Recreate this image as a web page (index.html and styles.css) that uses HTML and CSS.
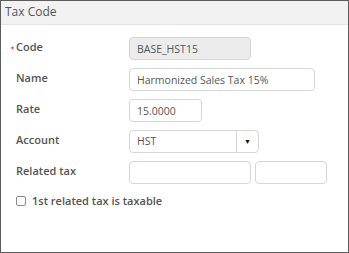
FILE: index.html
```html
<!DOCTYPE html>
<html>

<head>
    <title>Tax Code</title>

    <link rel="stylesheet" href="styles.css">
</head>

<body>
    <div class="panel">
        <div class="panel-header">Tax Code</div>

        <form class="tax-form">
            <label class="field-label required">Code</label>
            <div class="field">
                <input type="text" class="text-input code-input" value="BASE_HST15" readonly>
            </div>

            <label class="field-label">Name</label>
            <div class="field">
                <input type="text" class="text-input name-input" value="Harmonized Sales Tax 15%">
            </div>

            <label class="field-label">Rate</label>
            <div class="field">
                <input type="text" class="text-input rate-input" value="15.0000">
            </div>

            <label class="field-label">Account</label>
            <div class="field">
                <div class="select-box">
                    <span class="select-value">HST</span>
                    <span class="select-button">&#9660;</span>
                </div>
            </div>

            <label class="field-label">Related tax</label>
            <div class="field related">
                <input type="text" class="text-input related-input">
                <input type="text" class="text-input related-input-small">
            </div>

            <label class="check-row">
                <span class="check-box"></span>
                1st related tax is taxable
            </label>
        </form>
    </div>
</body>

</html>
```

FILE: styles.css
```css
body {
    margin: 0;
    padding: 0;
    font-family: "Open Sans", Arial, sans-serif;
    background-color: #fff;
}

.panel {
    width: 349px;
    height: 253px;
    box-sizing: border-box;
    border: 1px solid #5c5c5c;
    background-color: #fff;
}

.panel-header {
    height: 23px;
    line-height: 22px;
    padding-left: 4px;
    background-color: #f2f2f2;
    border-bottom: 1px solid #e4e4e4;
    color: #555;
    font-size: 12px;
}

.tax-form {
    display: grid;
    grid-template-columns: 113px auto;
    row-gap: 8px;
    align-items: center;
    padding: 12px 0 0 15px;
}

.field-label {
    color: #555;
    font-size: 11px;
    font-weight: 600;
    margin-top: -4px;
}

.field-label.required::before {
    content: "\2022";
    color: #e03030;
    display: inline-block;
    width: 5px;
    margin-left: -5px;
    font-size: 8px;
}

.field {
    display: flex;
    gap: 4px;
}

.text-input {
    box-sizing: border-box;
    height: 23px;
    padding: 0 7px;
    border: 1px solid #d6d6d6;
    border-radius: 4px;
    font-family: "Open Sans", Arial, sans-serif;
    font-size: 10.5px;
    color: #555;
    background-color: #fff;
    outline: none;
}

.code-input {
    width: 122px;
    background-color: #ececec;
}

.name-input {
    width: 186px;
}

.rate-input {
    width: 73px;
}

.related-input {
    width: 122px;
}

.related-input-small {
    width: 72px;
}

.select-box {
    box-sizing: border-box;
    display: flex;
    width: 130px;
    height: 23px;
    border: 1px solid #d6d6d6;
    border-radius: 4px;
    font-size: 10.5px;
    color: #555;
}

.select-value {
    flex: 1;
    padding-left: 7px;
    line-height: 21px;
}

.select-button {
    width: 21px;
    border-left: 1px solid #d6d6d6;
    text-align: center;
    line-height: 21px;
    font-size: 7px;
    color: #111;
}

.check-row {
    grid-column: 1 / span 2;
    display: flex;
    align-items: center;
    gap: 6px;
    margin-top: 1px;
    color: #555;
    font-size: 11px;
    font-weight: 600;
}

.check-box {
    box-sizing: border-box;
    width: 10px;
    height: 10px;
    border: 1px solid #8a8a8a;
    border-radius: 2px;
    background-color: #fff;
}
```
